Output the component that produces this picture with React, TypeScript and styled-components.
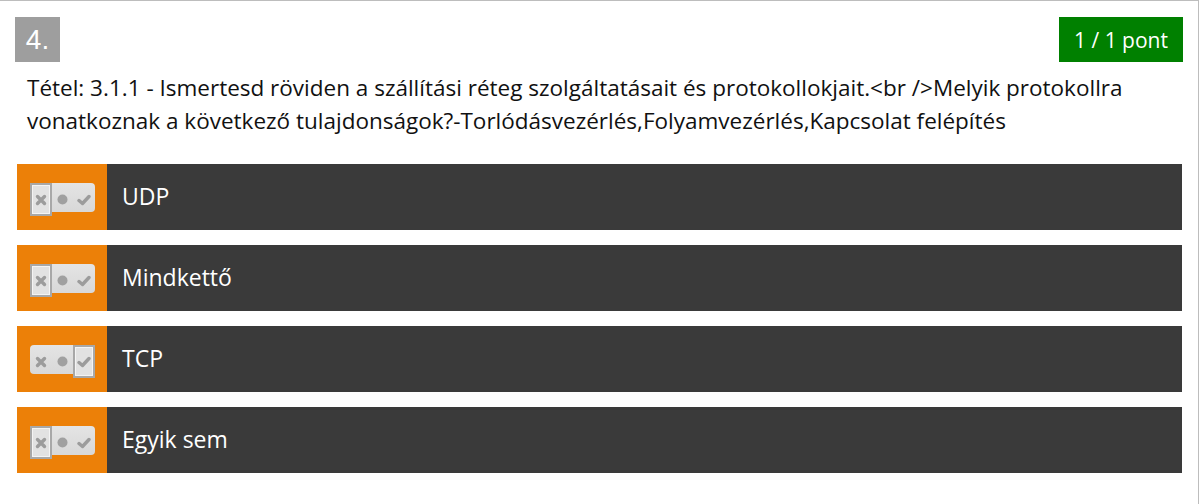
import styled, { createGlobalStyle } from 'styled-components';

type Choice = 'no' | 'none' | 'yes';

type AnswerRowProps = {
	label: string;
	choice: Choice;
};

const answers: AnswerRowProps[] = [
	{ label: 'UDP', choice: 'no' },
	{ label: 'Mindkettő', choice: 'no' },
	{ label: 'TCP', choice: 'yes' },
	{ label: 'Egyik sem', choice: 'no' },
];

const GlobalStyle = createGlobalStyle`
	body {
		margin: 0;
		background: #ffffff;
		font-family: 'Open Sans', 'Noto Sans', sans-serif;
	}
`;

const XIcon = () => (
	<svg width="12" height="12" viewBox="0 0 12 12">
		<path d="M2.5 2.5 L9.5 9.5 M9.5 2.5 L2.5 9.5" stroke="#9c9c9c" strokeWidth="3.4" strokeLinecap="round" />
	</svg>
);

const DotIcon = () => (
	<svg width="11" height="11" viewBox="0 0 11 11">
		<circle cx="5.5" cy="5.5" r="5" fill="#a0a0a0" />
	</svg>
);

const CheckIcon = () => (
	<svg width="14" height="12" viewBox="0 0 14 12">
		<path d="M2 6.5 L5.5 9.5 L12 2.5" stroke="#9c9c9c" strokeWidth="3.4" fill="none" strokeLinecap="round" strokeLinejoin="round" />
	</svg>
);

const Toggle = ({ choice }: { choice: Choice }) => {
	return (
		<Track>
			<Slot $active={choice === 'no'}>
				<XIcon />
			</Slot>
			<Slot $active={choice === 'none'}>
				<DotIcon />
			</Slot>
			<Slot $active={choice === 'yes'}>
				<CheckIcon />
			</Slot>
		</Track>
	);
};

const AnswerRow = ({ label, choice }: AnswerRowProps) => {
	return (
		<Row>
			<ToggleCell>
				<Toggle choice={choice} />
			</ToggleCell>
			<Label>{label}</Label>
		</Row>
	);
};

export default function App() {
	return (
		<>
			<GlobalStyle />
			<Card>
				<Header>
					<Number>4.</Number>
					<Points>1 / 1 pont</Points>
				</Header>
				<Question>
					Tétel: 3.1.1 - Ismertesd röviden a szállítási réteg szolgáltatásait és protokollokjait.&lt;br /&gt;Melyik
					protokollra vonatkoznak a következő tulajdonságok?-Torlódásvezérlés,Folyamvezérlés,Kapcsolat felépítés
				</Question>
				<Answers>
					{answers.map((a) => (
						<AnswerRow key={a.label} label={a.label} choice={a.choice} />
					))}
				</Answers>
			</Card>
		</>
	);
}

const Card = styled.div`
	width: 1199px;
	height: 504px;
	box-sizing: border-box;
	border-top: 1px solid #bdbdbd;
	border-right: 1px solid #bdbdbd;
	padding: 16px 16px 0 15px;
`;

const Header = styled.div`
	display: flex;
	justify-content: space-between;
	align-items: flex-start;
`;

const Number = styled.div`
	background: #9e9e9e;
	color: #ffffff;
	width: 45px;
	height: 45px;
	display: flex;
	align-items: center;
	justify-content: center;
	font-size: 28px;
	font-family: 'Liberation Sans', Arial, sans-serif;
`;

const Points = styled.div`
	background: #008000;
	color: #ffffff;
	width: 124px;
	height: 45px;
	margin-right: -1px;
	display: flex;
	align-items: center;
	justify-content: center;
	font-size: 21px;
`;

const Question = styled.p`
	margin: 9px 0 0 12px;
	font-size: 22.5px;
	line-height: 33px;
	color: #111111;
`;

const Answers = styled.div`
	display: flex;
	flex-direction: column;
	gap: 15px;
	margin: 27px 0 0 2px;
`;

const Row = styled.div`
	display: flex;
	height: 66px;
	background: #3a3a3a;
`;

const ToggleCell = styled.div`
	width: 90px;
	background: #ec8008;
	display: flex;
	align-items: center;
	justify-content: center;
	padding-top: 1px;
	box-sizing: border-box;
`;

const Track = styled.div`
	width: 65px;
	height: 29px;
	border-radius: 4px;
	background: linear-gradient(#e4e4e4, #d8d8d8);
	display: grid;
	grid-template-columns: repeat(3, 1fr);
	align-items: center;
	margin-left: 1px;
`;

const Slot = styled.div<{ $active: boolean }>`
	height: ${(p) => (p.$active ? '33px' : '29px')};
	display: flex;
	align-items: center;
	justify-content: center;
	box-sizing: border-box;
	border: ${(p) => (p.$active ? '2px solid #a8a8a8' : 'none')};
	box-shadow: ${(p) => (p.$active ? 'inset 0 0 0 1px #f4f4f4' : 'none')};
	background: ${(p) => (p.$active ? '#e2e2e2' : 'transparent')};
`;

const Label = styled.div`
	flex: 1;
	display: flex;
	align-items: center;
	padding: 0 0 3px 15px;
	color: #ffffff;
	font-size: 23px;
`;
